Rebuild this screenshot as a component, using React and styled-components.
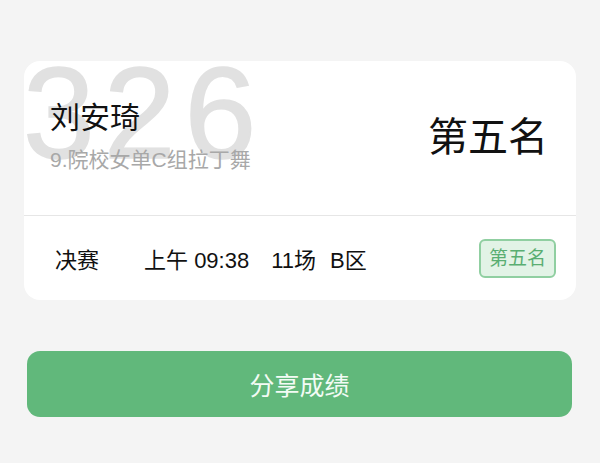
import React from "react";
import styled, { createGlobalStyle } from "styled-components";

const GlobalStyle = createGlobalStyle`
  html, body {
    margin: 0;
    padding: 0;
    background: #f4f4f4;
    font-family: "Liberation Sans", "Noto Sans CJK SC", sans-serif;
  }
`;

const Page = styled.div`
  width: 600px;
  height: 463px;
  box-sizing: border-box;
  padding: 61px 24px 0 24px;
  display: flex;
  flex-direction: column;
`;

const Card = styled.div`
  position: relative;
  height: 239px;
  background: #fff;
  border-radius: 16px;
  overflow: hidden;
  display: flex;
  flex-direction: column;
`;

const Watermark = styled.div`
  position: absolute;
  left: -1px;
  top: -12px;
  font-family: "Liberation Sans", Arial, sans-serif;
  font-size: 129px;
  line-height: 1;
  letter-spacing: 9px;
  color: #e1e1e1;
  -webkit-text-stroke: 1.5px #e1e1e1;
  user-select: none;
`;

const TopSection = styled.div`
  position: relative;
  height: 154px;
  display: flex;
  align-items: center;
  justify-content: space-between;
  padding: 0 28px 0 26px;
  border-bottom: 1px solid #e6e6e6;
`;

const Info = styled.div`
  display: flex;
  flex-direction: column;
  margin-top: -4px;
`;

const Name = styled.div`
  font-size: 30px;
  line-height: 40px;
  color: #111;
`;

const Event = styled.div`
  font-size: 21px;
  line-height: 28px;
  color: #a8a8a8;
  margin-top: 8px;
`;

const Rank = styled.div`
  font-size: 40px;
  line-height: 1.2;
  color: #111;
  margin-top: -2px;
`;

const BottomSection = styled.div`
  flex: 1;
  display: flex;
  align-items: center;
  padding: 0 20px 0 31px;
`;

const Detail = styled.span`
  font-size: 22px;
  color: #111;
  white-space: pre;
  margin-right: ${({ gap }) => gap || 0}px;
`;

const Badge = styled.div`
  margin-left: auto;
  padding: 2px 8px;
  border: 2px solid #90cfa1;
  border-radius: 6px;
  background: #e2f3e6;
  color: #5aae72;
  font-size: 19px;
  line-height: 31px;
`;

const ShareButton = styled.button`
  margin: 51px 4px 0 3px;
  height: 66px;
  border: none;
  border-radius: 13px;
  background: #61b87b;
  color: #f3fbf5;
  font-family: "Noto Sans CJK SC", sans-serif;
  font-size: 25px;
  cursor: pointer;
`;

export default function App() {
  return (
    <>
      <GlobalStyle />
      <Page>
        <Card>
          <Watermark>326</Watermark>
          <TopSection>
            <Info>
              <Name>刘安琦</Name>
              <Event>9.院校女单C组拉丁舞</Event>
            </Info>
            <Rank>第五名</Rank>
          </TopSection>
          <BottomSection>
            <Detail gap={45}>决赛</Detail>
            <Detail gap={22}>上午 09:38</Detail>
            <Detail gap={14}>11场</Detail>
            <Detail>B区</Detail>
            <Badge>第五名</Badge>
          </BottomSection>
        </Card>
        <ShareButton>分享成绩</ShareButton>
      </Page>
    </>
  );
}
